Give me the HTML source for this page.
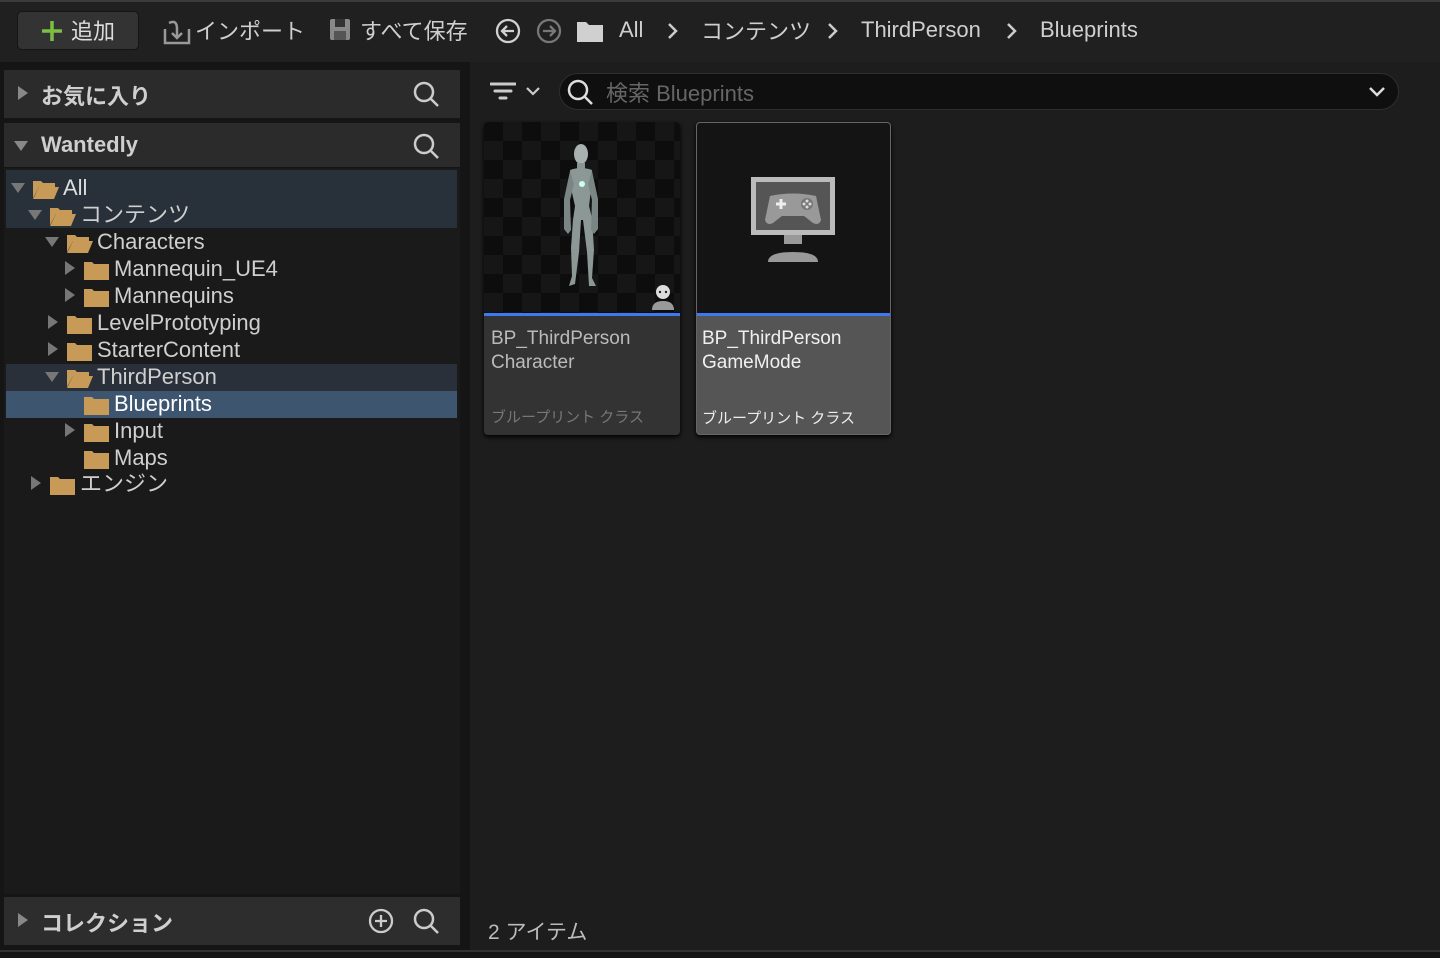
<!DOCTYPE html>
<html><head><meta charset="utf-8"><style>
*{margin:0;padding:0;box-sizing:border-box}
body{width:1440px;height:958px;background:#1c1c1c;font-family:"Liberation Sans","Noto Sans CJK JP",sans-serif;color:#c8c8c8;position:relative;overflow:hidden}
.abs{position:absolute}
.top{left:0;top:0;width:1440px;height:62px;background:#202020;border-top:2px solid #3a3a3a}
.tb{top:30px;transform:translateY(-50%);font-size:22px;color:#cfcfcf;white-space:nowrap}
.hdr{left:4px;width:456px;background:#2b2b2b;font-size:22px;font-weight:bold;color:#cfcfcf}
.row{position:absolute;height:27px;font-size:22px;line-height:27px;color:#cfcfcf;white-space:nowrap}
.tri{position:absolute;width:0;height:0}
.tr-d{border-left:7px solid transparent;border-right:7px solid transparent;border-top:10px solid #777;top:9px}
.tr-r{border-top:7px solid transparent;border-bottom:7px solid transparent;border-left:10px solid #777;top:6px}
.fold{position:absolute;top:5px;width:27px;height:20px}
</style></head><body>
<div class="abs top"></div>
<div class="abs" style="left:17px;top:11px;width:122px;height:39px;background:#333;border:1px solid #151515;border-radius:5px"></div>
<svg class="abs" style="left:40px;top:19px" width="24" height="24"><path d="M12 2V22M2 12H22" stroke="#7bc043" stroke-width="3.5"/></svg>
<div class="abs tb" style="left:71px;color:#ddd">追加</div>
<svg class="abs" style="left:163px;top:17px" width="28" height="28" fill="none" stroke="#999" stroke-width="2.5"><path d="M2 12V26H26V12M6 6q8-4 8 6v8M9 16l5 5 5-5"/></svg>
<div class="abs tb" style="left:195px">インポート</div>
<svg class="abs" style="left:328px;top:18px" width="24" height="24"><rect x="2" y="1" width="20" height="21" rx="2" fill="#888"/><rect x="7" y="1" width="10" height="8" fill="#333"/><rect x="6" y="13" width="12" height="9" fill="#555"/></svg>
<div class="abs tb" style="left:360px">すべて保存</div>
<svg class="abs" style="left:495px;top:18px" width="26" height="26" fill="none" stroke="#d0d0d0" stroke-width="2.3"><circle cx="13" cy="13" r="11"/><path d="M19 13H8M12 8l-5 5 5 5"/></svg>
<svg class="abs" style="left:536px;top:18px" width="26" height="26" fill="none" stroke="#777" stroke-width="2.3"><circle cx="13" cy="13" r="11"/><path d="M7 13H18M14 8l5 5-5 5"/></svg>
<svg class="abs" style="left:576px;top:19px" width="28" height="24"><path d="M1 3h9l3 3h14v17H1z" fill="#d0d0d0"/></svg>
<div class="abs tb" style="left:619px">All</div>
<svg class="abs" style="left:666px;top:22px" width="14" height="18" fill="none" stroke="#ccc" stroke-width="2.5"><path d="M3 2l7 7-7 7"/></svg>
<div class="abs tb" style="left:701px">コンテンツ</div>
<svg class="abs" style="left:826px;top:22px" width="14" height="18" fill="none" stroke="#ccc" stroke-width="2.5"><path d="M3 2l7 7-7 7"/></svg>
<div class="abs tb" style="left:861px">ThirdPerson</div>
<svg class="abs" style="left:1005px;top:22px" width="14" height="18" fill="none" stroke="#ccc" stroke-width="2.5"><path d="M3 2l7 7-7 7"/></svg>
<div class="abs tb" style="left:1040px">Blueprints</div>

<!-- left panel -->
<div class="abs" style="left:0;top:62px;width:470px;height:896px;background:#151515"></div>
<div class="abs hdr" style="top:70px;height:48px"><div class="tri tr-r" style="left:14px;top:16px;border-left-color:#888"></div><span class="abs" style="left:37px;top:9px">お気に入り</span></div>
<div class="abs hdr" style="top:123px;height:44px"><div class="tri tr-d" style="left:10px;top:18px;border-top-color:#888"></div><span class="abs" style="left:37px;top:9px">Wantedly</span></div>
<svg class="abs" style="left:412px;top:80px" width="28" height="28" fill="none" stroke="#ccc" stroke-width="2.5"><circle cx="12" cy="12" r="9"/><path d="M18.5 18.5L26 26"/></svg>
<svg class="abs" style="left:412px;top:132px" width="28" height="28" fill="none" stroke="#ccc" stroke-width="2.5"><circle cx="12" cy="12" r="9"/><path d="M18.5 18.5L26 26"/></svg>
<div class="abs" style="left:4px;top:168px;width:456px;height:726px;background:#1a1a1a"></div>
<div class="abs" style="left:6px;top:170px;width:451px;height:58px;background:#28303a"></div>
<div class="abs" style="left:6px;top:364px;width:451px;height:27px;background:#2a3039"></div>
<div class="abs" style="left:6px;top:391px;width:451px;height:27px;background:#3e5570"></div>

<!-- tree rows -->
<div class="row" style="top:174px;left:0;width:460px"><div class="tri tr-d" style="left:11px"></div><svg class="fold" style="left:32px" viewBox="0 0 27 20"><path d="M1 2h8l2 2h12v4H7L1 19z" fill="#c89a58"/><path d="M7 8h20l-5 12H1z" fill="#c89a58"/></svg><span style="position:absolute;left:63px;color:#ddd">All</span></div>
<div class="row" style="top:201px;left:0;width:460px"><div class="tri tr-d" style="left:28px"></div><svg class="fold" style="left:49px" viewBox="0 0 27 20"><path d="M1 2h8l2 2h12v4H7L1 19z" fill="#c89a58"/><path d="M7 8h20l-5 12H1z" fill="#c89a58"/></svg><span style="position:absolute;left:80px">コンテンツ</span></div>
<div class="row" style="top:228px;left:0;width:460px"><div class="tri tr-d" style="left:45px"></div><svg class="fold" style="left:66px" viewBox="0 0 27 20"><path d="M1 2h8l2 2h12v4H7L1 19z" fill="#c89a58"/><path d="M7 8h20l-5 12H1z" fill="#c89a58"/></svg><span style="position:absolute;left:97px">Characters</span></div>
<div class="row" style="top:255px;left:0;width:460px"><div class="tri tr-r" style="left:65px"></div><svg class="fold" style="left:83px" viewBox="0 0 27 20"><path d="M1 2h8l2 2h15v16H1z" fill="#c89a58"/></svg><span style="position:absolute;left:114px">Mannequin_UE4</span></div>
<div class="row" style="top:282px;left:0;width:460px"><div class="tri tr-r" style="left:65px"></div><svg class="fold" style="left:83px" viewBox="0 0 27 20"><path d="M1 2h8l2 2h15v16H1z" fill="#c89a58"/></svg><span style="position:absolute;left:114px">Mannequins</span></div>
<div class="row" style="top:309px;left:0;width:460px"><div class="tri tr-r" style="left:48px"></div><svg class="fold" style="left:66px" viewBox="0 0 27 20"><path d="M1 2h8l2 2h15v16H1z" fill="#c89a58"/></svg><span style="position:absolute;left:97px">LevelPrototyping</span></div>
<div class="row" style="top:336px;left:0;width:460px"><div class="tri tr-r" style="left:48px"></div><svg class="fold" style="left:66px" viewBox="0 0 27 20"><path d="M1 2h8l2 2h15v16H1z" fill="#c89a58"/></svg><span style="position:absolute;left:97px">StarterContent</span></div>
<div class="row" style="top:363px;left:0;width:460px"><div class="tri tr-d" style="left:45px"></div><svg class="fold" style="left:66px" viewBox="0 0 27 20"><path d="M1 2h8l2 2h12v4H7L1 19z" fill="#c89a58"/><path d="M7 8h20l-5 12H1z" fill="#c89a58"/></svg><span style="position:absolute;left:97px">ThirdPerson</span></div>
<div class="row" style="top:390px;left:0;width:460px"><svg class="fold" style="left:83px" viewBox="0 0 27 20"><path d="M1 2h8l2 2h15v16H1z" fill="#c89a58"/></svg><span style="position:absolute;left:114px;color:#fff">Blueprints</span></div>
<div class="row" style="top:417px;left:0;width:460px"><div class="tri tr-r" style="left:65px"></div><svg class="fold" style="left:83px" viewBox="0 0 27 20"><path d="M1 2h8l2 2h15v16H1z" fill="#c89a58"/></svg><span style="position:absolute;left:114px">Input</span></div>
<div class="row" style="top:444px;left:0;width:460px"><svg class="fold" style="left:83px" viewBox="0 0 27 20"><path d="M1 2h8l2 2h15v16H1z" fill="#c89a58"/></svg><span style="position:absolute;left:114px">Maps</span></div>
<div class="row" style="top:470px;left:0;width:460px"><div class="tri tr-r" style="left:31px"></div><svg class="fold" style="left:49px" viewBox="0 0 27 20"><path d="M1 2h8l2 2h15v16H1z" fill="#c89a58"/></svg><span style="position:absolute;left:80px">エンジン</span></div>

<div class="abs hdr" style="top:897px;height:48px;background:#2d2d2d"><div class="tri tr-r" style="left:14px;top:16px;border-left-color:#888"></div><span class="abs" style="left:37px;top:9px">コレクション</span></div>
<svg class="abs" style="left:367px;top:907px" width="28" height="28" fill="none" stroke="#ccc" stroke-width="2.3"><circle cx="14" cy="14" r="11"/><path d="M14 8v12M8 14h12"/></svg>
<svg class="abs" style="left:412px;top:907px" width="28" height="28" fill="none" stroke="#ccc" stroke-width="2.5"><circle cx="12" cy="12" r="9"/><path d="M18.5 18.5L26 26"/></svg>

<!-- right -->
<div class="abs" style="left:470px;top:62px;width:970px;height:888px;background:#1d1d1d"></div>
<svg class="abs" style="left:490px;top:81px" width="26" height="22"><path d="M1 3h24M5 10h16M10 17h6" stroke="#ccc" stroke-width="3" stroke-linecap="round"/></svg>
<svg class="abs" style="left:525px;top:86px" width="16" height="12" fill="none" stroke="#ccc" stroke-width="2.2"><path d="M2 2l6 6 6-6"/></svg>
<div class="abs" style="left:559px;top:73px;width:840px;height:37px;background:#0f0f0f;border:1px solid #2e2e2e;border-radius:19px"></div>
<svg class="abs" style="left:566px;top:78px" width="28" height="28" fill="none" stroke="#ddd" stroke-width="2.5"><circle cx="12" cy="12" r="9"/><path d="M18.5 18.5L26 26"/></svg>
<div class="abs" style="left:606px;top:76px;font-size:22px;color:#666">検索 Blueprints</div>
<svg class="abs" style="left:1368px;top:85px" width="18" height="14" fill="none" stroke="#ddd" stroke-width="2.5"><path d="M2 3l7 7 7-7"/></svg>

<!-- card 1 -->
<div class="abs" style="left:484px;top:122px;width:196px;height:313px;background:#333;border-radius:4px;box-shadow:0 2px 4px #000;overflow:hidden">
<div style="height:191px;background-color:#0d0d0d;background-image:linear-gradient(45deg,#161616 25%,transparent 25%,transparent 75%,#161616 75%),linear-gradient(45deg,#161616 25%,transparent 25%,transparent 75%,#161616 75%);background-size:38px 38px;background-position:0 0,19px 19px"></div>
<div style="height:3px;background:#3c7af0"></div>
<div style="padding:11px 7px;font-size:19px;line-height:24px;color:#bbb">BP_ThirdPerson<br>Character</div>
<div class="abs" style="left:7px;top:284px;font-size:15px;color:#777">ブループリント クラス</div>
</div>
<svg class="abs" style="left:550px;top:140px" width="60" height="155"><ellipse cx="31" cy="14" rx="7" ry="10" fill="#a7b2b0"/><path d="M27 23h8v6h-8z" fill="#8a9492"/><path d="M20 30q11-4 22 0l-1 20-2 16 3 12 2 32-2 28 4 8-7 0-2-34-4-32h-2l-2 32-4 32-6 2 3-10-1-28 2-28 2-14-4-18z" fill="#8c9896"/><path d="M20 31l-6 28 0 30 4 5 3-4-1-30 4-16z M42 31l6 28 0 30-4 5-3-4 1-30-4-16z" fill="#7a8684"/><circle cx="32" cy="44" r="3" fill="#cfe"/></svg>
<svg class="abs" style="left:649px;top:282px" width="28" height="28"><circle cx="14" cy="10" r="7" fill="#ddd"/><path d="M3 28q0-9 11-9t11 9z" fill="#999"/><circle cx="11" cy="10" r="1.2" fill="#222"/><circle cx="17" cy="10" r="1.2" fill="#222"/></svg>

<!-- card 2 -->
<div class="abs" style="left:696px;top:122px;width:195px;height:313px;background:#555;border:1px solid #666;border-radius:4px;box-shadow:0 2px 4px #000;overflow:hidden">
<div style="height:190px;background:#141414"></div>
<div style="height:3px;background:#3c7af0"></div>
<div style="padding:11px 5px;font-size:19px;line-height:24px;color:#f0f0f0">BP_ThirdPerson<br>GameMode</div>
<div class="abs" style="left:5px;top:284px;font-size:15px;color:#eee">ブループリント クラス</div>
</div>
<svg class="abs" style="left:750px;top:176px" width="86" height="86"><rect x="1" y="1" width="84" height="58" fill="#bbb"/><rect x="6" y="6" width="74" height="48" fill="#555"/><path d="M34 59h18v9H34z" fill="#999"/><path d="M18 86q0-10 25-10t25 10z" fill="#999"/><path d="M20 20q23-5 46 0l5 24q-2 6-8 3l-9-7H32l-9 7q-6 3-8-3z" fill="#999"/><path d="M26 28h10M31 23v10" stroke="#eee" stroke-width="3"/><circle cx="57" cy="28" r="6" fill="#777"/><circle cx="57" cy="25" r="1.5" fill="#ddd"/><circle cx="57" cy="31" r="1.5" fill="#ddd"/><circle cx="54" cy="28" r="1.5" fill="#ddd"/><circle cx="60" cy="28" r="1.5" fill="#ddd"/></svg>

<div class="abs" style="left:488px;top:916px;font-size:21px;color:#bbb">2 アイテム</div>
<div class="abs" style="left:0;top:950px;width:1440px;height:8px;background:#151515;border-top:2px solid #333"></div>
</body></html>
